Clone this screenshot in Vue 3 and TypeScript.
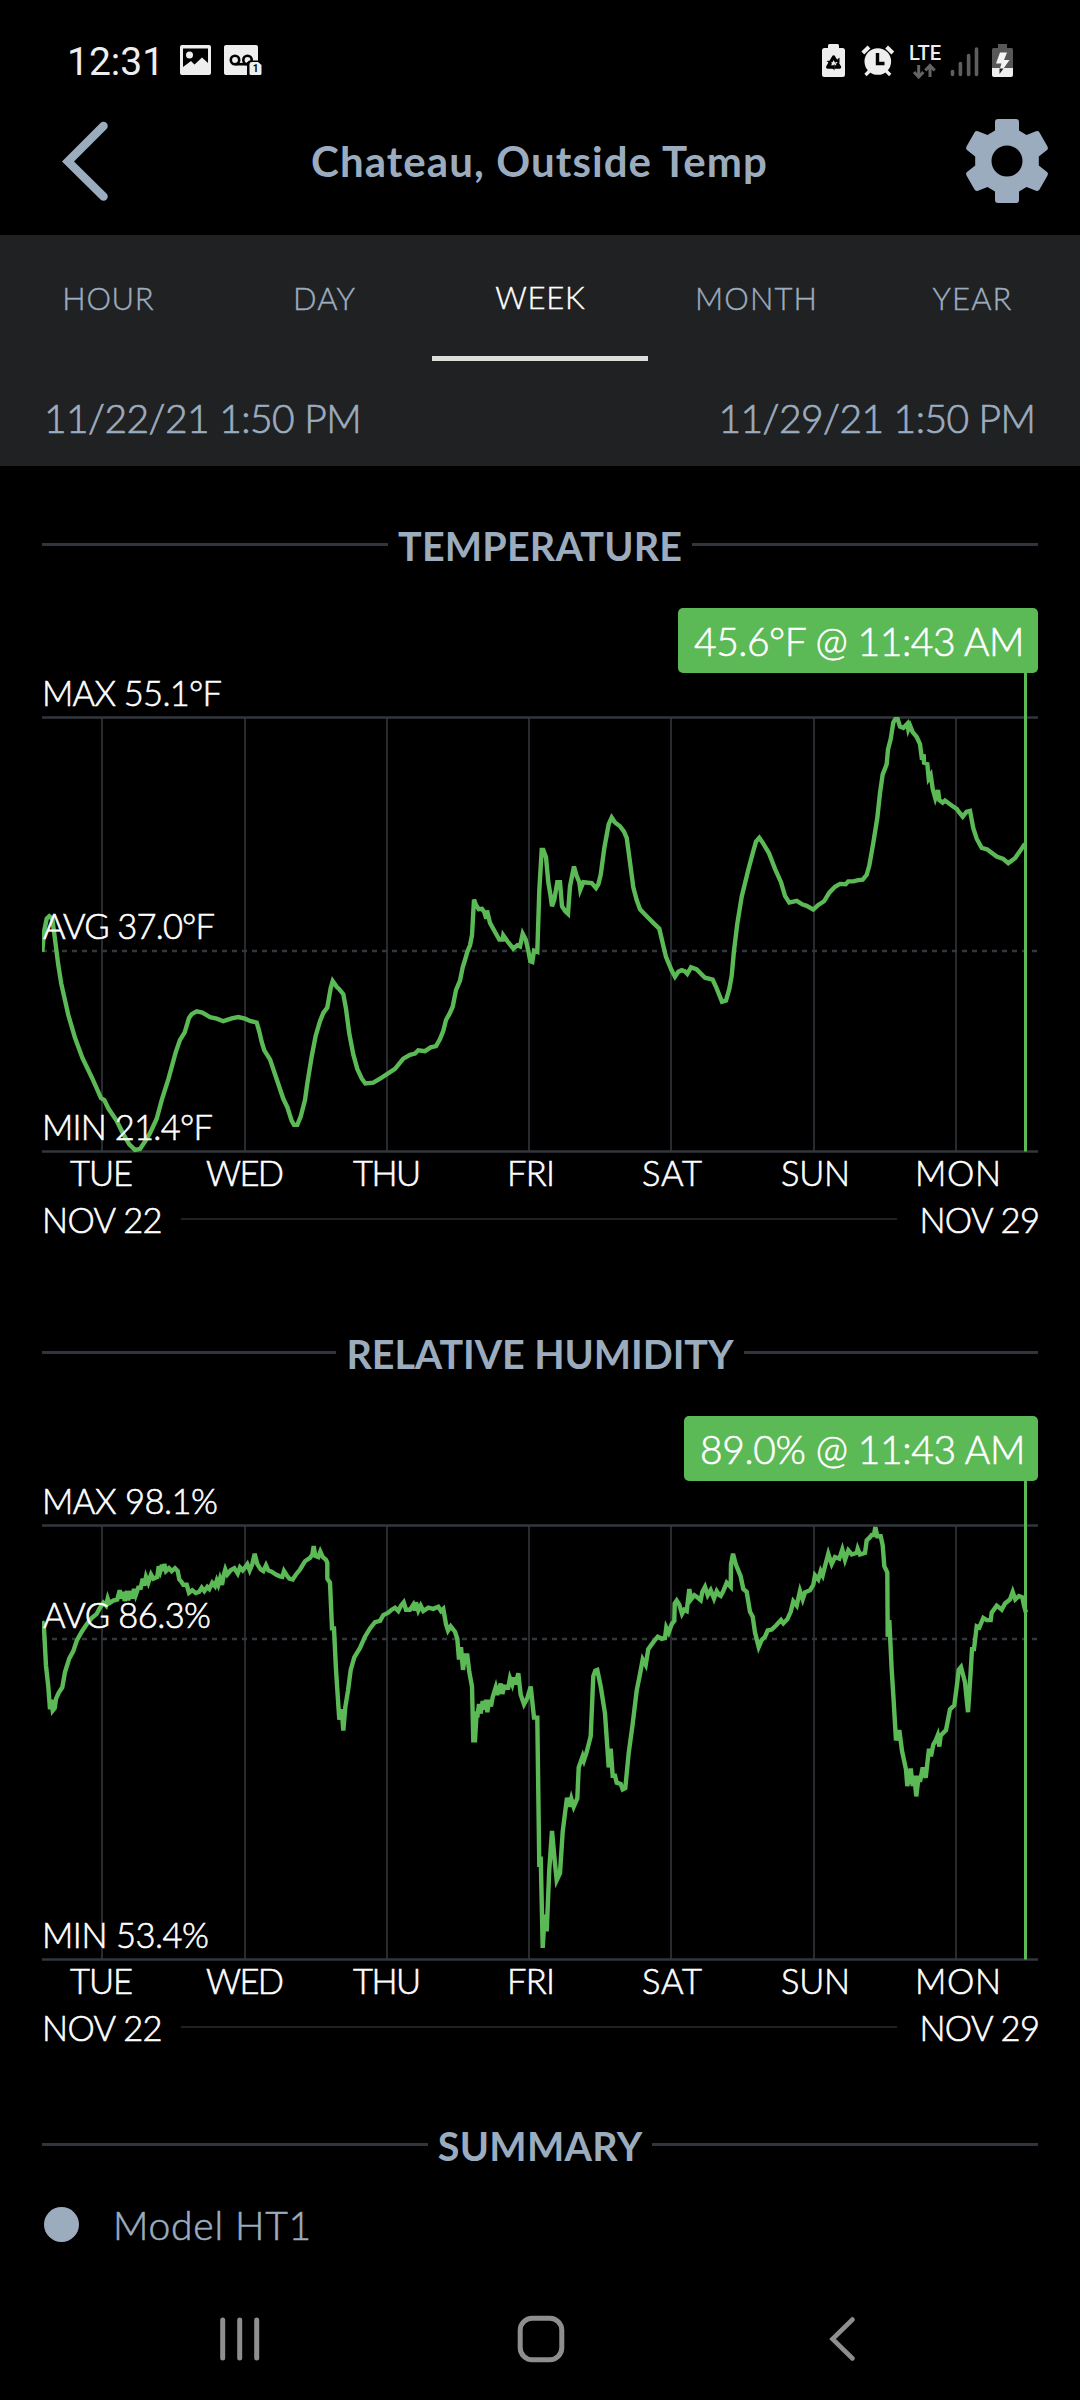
<script setup lang="ts">
import type { Directive } from 'vue'

type Sample = [number, number]
interface Block { start: number; samples: Sample[] }
interface Label { text: string; x: number; y: number; width: number }
interface Chart {
  title: string
  titleWidth: number
  readout: string
  readoutWidth: number
  boxWidth: number
  average: number
  labels: Label[]
  top: number
  blocks: Block[]
}

// Tracks a label out (or in) to the advance width it is designed for.
const vFit: Directive<HTMLElement, number> = {
  mounted(el, { value }) {
    const gap = (value - el.getBoundingClientRect().width) / (el.textContent ?? '').trim().length
    el.style.letterSpacing = `${gap}px`
    el.style.marginRight = `${-gap}px`
  },
}

const tabs = [
  { name: 'HOUR', width: 92 },
  { name: 'DAY', width: 63 },
  { name: 'WEEK', width: 90 },
  { name: 'MONTH', width: 123 },
  { name: 'YEAR', width: 80 },
]

const days: Label[] = [
  { text: 'TUE', x: 28, y: 513, width: 63 },
  { text: 'WED', x: 164, y: 513, width: 78 },
  { text: 'THU', x: 311, y: 513, width: 68 },
  { text: 'FRI', x: 465, y: 513, width: 48 },
  { text: 'SAT', x: 600, y: 513, width: 60 },
  { text: 'SUN', x: 739, y: 513, width: 69 },
  { text: 'MON', x: 873, y: 513, width: 86 },
]
const gridlines = [60, 203, 345, 487, 629, 772, 914]

const charts: Chart[] = [
  {
    title: 'TEMPERATURE', titleWidth: 284, readout: '45.6°F @ 11:43 AM', readoutWidth: 330, boxWidth: 360, average: 278,
    labels: [
      { text: 'MAX 55.1°F', x: 0, y: 33, width: 180 },
      { text: 'AVG 37.0°F', x: 1, y: 266, width: 172 },
      { text: 'MIN 21.4°F', x: 0, y: 467, width: 171 },
    ],
    top: 283,
    blocks: [
      { start: -66, samples: [[67,848],[72,800],[80,768],[88,762],[97,768],[104,812],[115,880],[124,925],[145,1000],[165,1055],[187,1103],[215,1150],[235,1185],[243,1200],[253,1205],[265,1225],[290,1255],[310,1287],[328,1312],[345,1325],[360,1323],[375,1305],[390,1285],[410,1250],[425,1205],[445,1155],[467,1090],[480,1060],[494,1042],[507,1007],[515,998],[530,991],[547,994],[570,1005],[590,1009],[610,1015],[635,1008],[655,1005],[675,1009],[692,1015],[710,1018],[718,1040],[725,1065],[733,1085],[750,1107],[770,1155],[790,1202],[802,1222],[815,1255],[822,1265],[832,1265],[842,1245],[855,1205],[862,1165],[875,1100],[887,1050],[900,1015],[910,995],[922,982],[932,935],[938,918],[950,932],[957,937],[970,950],[978,985],[988,1045],[1000,1095],[1012,1130],[1025,1153]] },
      { start: 954, samples: [[16,1165],[40,1163],[65,1151],[105,1130],[130,1105],[150,1096],[165,1093],[175,1085],[195,1087],[212,1078],[228,1075],[240,1058],[250,1038],[258,1012],[268,998],[278,980],[288,940],[300,917],[308,885],[316,865],[322,848],[330,832],[336,808],[342,722],[348,735],[356,745],[366,744],[373,752],[379,768],[381,748],[390,778],[405,800],[418,818],[428,818],[430,808],[445,825],[460,840],[472,832],[480,835],[488,804],[497,818],[505,845],[511,870],[517,872],[522,845],[532,848],[538,700],[545,602],[550,602],[558,620],[565,680],[572,715],[576,738],[583,722],[592,680],[600,680],[606,738],[616,750],[624,756],[630,690],[642,642],[650,665],[658,680],[661,698],[670,680],[695,682],[708,694],[715,685],[722,662],[733,598],[746,540],[755,524],[765,536],[780,545],[792,558],[800,573],[810,632],[820,692],[830,723],[840,745],[860,762],[880,778],[898,792],[910,833],[918,860],[935,893],[945,908],[955,896],[965,892],[975,895],[982,901],[993,885],[1010,890]] },
      { start: 1974, samples: [[15,910],[38,915],[48,932],[66,968],[78,965],[88,937],[95,905],[102,845],[112,780],[125,715],[145,650],[158,610],[168,582],[178,573],[190,587],[207,610],[225,648],[243,680],[255,713],[268,729],[290,725],[308,734],[320,737],[340,746],[355,735],[372,726],[388,705],[405,691],[420,684],[437,685],[445,678],[460,678],[475,675],[488,674],[500,662],[508,640],[520,585],[532,525],[540,465],[548,420],[554,408],[560,395],[564,360],[572,335],[580,295],[586,287],[593,287],[600,305],[610,308],[622,298],[625,312],[630,302],[638,318],[650,330],[660,347],[666,385],[671,372],[672,392],[682,395],[686,430],[692,422],[698,455],[706,478],[714,458],[718,482],[728,488],[735,483],[755,495],[770,503],[778,512],[788,522],[800,510],[810,508],[820,550],[830,575],[845,597],[862,601],[890,618],[910,624],[925,634],[945,622],[960,605],[975,587]] },
    ],
  },
  {
    title: 'RELATIVE HUMIDITY', titleWidth: 387, readout: '89.0% @ 11:43 AM', readoutWidth: 325, boxWidth: 354, average: 158,
    labels: [
      { text: 'MAX 98.1%', x: 0, y: 33, width: 176 },
      { text: 'AVG 86.3%', x: 1, y: 147, width: 168 },
      { text: 'MIN 53.4%', x: 0, y: 467, width: 167 },
    ],
    top: 302,
    blocks: [
      { start: -66, samples: [[67,532],[72,550],[78,640],[85,690],[90,745],[94,722],[98,748],[104,742],[108,720],[116,705],[127,692],[135,655],[148,622],[160,605],[170,580],[185,558],[200,540],[215,525],[230,515],[240,500],[250,488],[258,495],[263,478],[268,489],[280,483],[292,480],[299,458],[305,478],[310,462],[314,484],[321,460],[325,482],[332,460],[337,478],[342,455],[347,470],[355,452],[362,452],[368,430],[373,447],[378,426],[385,440],[393,420],[400,430],[412,426],[416,400],[421,412],[426,397],[430,412],[433,395],[438,412],[447,405],[455,412],[465,405],[473,412],[478,432],[484,437],[490,445],[500,445],[507,464],[517,458],[527,465],[537,462],[545,452],[553,460],[562,450],[568,455],[577,440],[585,448],[590,435],[595,445],[600,430],[606,445],[611,422],[616,408],[622,420],[632,410],[643,405],[653,418],[660,403],[668,410],[675,403],[682,395],[689,410],[697,395],[704,370],[712,395],[722,408],[730,412],[738,398],[745,410],[755,413],[768,420],[778,424],[787,426],[792,412],[800,422],[808,430],[818,432],[828,420],[840,408],[855,388],[870,380],[877,372],[881,352],[886,375],[895,378],[901,365],[908,378],[918,385],[922,392],[922,430],[930,440],[936,550],[942,550],[948,650],[958,770],[965,745],[970,796],[976,740],[984,700],[992,650],[1003,620]] },
      { start: 954, samples: [[0,597],[15,570],[30,550],[45,535],[60,532],[70,518],[85,512],[95,505],[105,500],[115,508],[123,495],[131,487],[138,505],[150,505],[160,493],[165,507],[168,487],[175,507],[182,495],[190,508],[205,500],[220,503],[235,498],[243,508],[250,503],[258,540],[264,555],[272,545],[285,558],[292,575],[297,625],[303,595],[309,650],[315,615],[322,615],[328,655],[336,690],[340,820],[345,820],[350,750],[352,765],[357,732],[362,755],[368,725],[375,745],[378,722],[382,752],[388,722],[393,738],[398,715],[407,692],[412,710],[422,683],[427,708],[433,690],[445,692],[450,670],[457,685],[462,668],[467,685],[475,658],[482,710],[492,733],[502,718],[512,690],[522,765],[532,765],[538,1125],[542,1100],[548,1320],[554,1240],[560,1280],[568,1130],[576,1038],[584,1110],[590,1157],[600,1140],[608,1040],[616,990],[621,958],[628,980],[634,960],[641,980],[652,960],[656,885],[668,858],[672,868],[680,848],[692,810],[700,665],[706,652],[712,650],[722,690],[735,755],[746,885],[752,840],[758,905],[765,905],[770,922],[782,925],[788,938],[796,935],[806,850],[818,780],[830,700],[840,660],[848,625],[857,638],[865,600],[880,583],[893,570],[905,575],[915,573],[919,548],[926,560],[935,540],[943,532],[944,490],[950,483],[958,493],[966,515],[973,505],[980,508],[988,455],[993,480],[1003,470],[1012,475],[1022,482],[1027,462],[1035,450],[1043,470],[1052,458],[1062,478],[1070,460],[1078,470]] },
      { start: 1974, samples: [[62,472],[70,460],[80,440],[92,450],[93,395],[99,370],[107,395],[122,425],[130,455],[140,462],[150,510],[158,522],[165,560],[176,595],[185,578],[195,570],[203,555],[215,553],[228,543],[243,530],[250,538],[262,528],[272,510],[280,485],[290,495],[300,460],[308,480],[315,463],[330,458],[340,445],[345,422],[355,432],[362,412],[368,422],[375,400],[385,370],[395,395],[405,378],[418,382],[427,360],[435,385],[445,362],[455,372],[470,368],[473,358],[480,372],[495,368],[500,338],[508,332],[515,325],[522,325],[526,306],[532,328],[542,328],[548,350],[553,400],[562,415],[563,570],[568,530],[575,650],[580,710],[588,820],[598,795],[606,845],[618,890],[622,930],[632,888],[638,930],[643,905],[649,955],[656,905],[660,920],[668,885],[677,910],[687,840],[693,858],[700,830],[707,820],[713,808],[718,835],[722,808],[738,795],[750,745],[763,735],[772,680],[776,650],[783,643],[795,680],[804,752],[810,680],[816,600],[822,600],[830,545],[838,548],[850,525],[860,530],[872,530],[875,512],[890,495],[905,505],[915,490],[930,480],[938,462],[946,480],[957,472],[967,475],[972,495],[978,512]] },
    ],
  },
]

const PLOT_TOP = 44.5
const PLOT_HEIGHT = 434
const SAMPLE_RANGE = 1046

function trace(chart: Chart): string {
  return chart.blocks
    .flatMap((b) => b.samples.map(([t, v]) => {
      const x = (b.start + t) / 3
      const y = PLOT_TOP + ((v - chart.top) * PLOT_HEIGHT) / SAMPLE_RANGE
      return `${x.toFixed(1)},${y.toFixed(1)}`
    }))
    .join(' ')
}
</script>

<template>
  <div class="screen">
    <div class="status">
      <span class="clock">12:31</span>
      <svg class="pic" width="31" height="30" viewBox="0 0 31 30">
        <path fill="#eee" fill-rule="evenodd" d="M2 0H29Q31 0 31 2V28Q31 30 29 30H2Q0 30 0 28V2Q0 0 2 0ZM3 3.500V22L11 16L14.500 19.500L22 12.500L28 18V3.500Z" />
        <circle cx="9.500" cy="10" r="3.500" fill="#eee" />
      </svg>
      <svg class="voicemail" width="38" height="30" viewBox="0 0 38 30">
        <path fill="#eee" d="M2 0H32Q34 0 34 2V15.500H26Q23.500 15.500 23.500 18V30H2Q0 30 0 28V2Q0 0 2 0Z" />
        <g fill="none" stroke="#000" stroke-width="2.600">
          <circle cx="11" cy="15" r="4.200" /><circle cx="23.500" cy="15" r="4.200" /><path d="M11 19.200H23.500" />
        </g>
        <path fill="#000" d="M23 17H34V30H23Z" />
        <path fill="#eee" d="M28 17H34L37.500 20V28.500Q37.500 30 36 30H27Q25.500 30 25.500 28.500V19Q25.500 17 28 17Z" />
        <text x="31.500" y="27" class="badge">1</text>
      </svg>
      <svg class="tray" width="194" height="40" viewBox="821 41 194 40">
        <path fill="#eee" d="M828 45.500Q828 44 829.500 44H837.500Q839 44 839 45.500V48H842.500Q845 48 845 50.500V74.500Q845 77 842.500 77H824.500Q822 77 822 74.500V50.500Q822 48 824.500 48H828Z" />
        <path d="M833.600 57L839.500 67H827.700Z" fill="none" stroke="#000" stroke-width="3.400" stroke-linejoin="round" />
        <path d="M828 60.500L833 63.500M839 59.500L835.500 63.500M833.600 65V70" stroke="#eee" stroke-width="1.300" />
        <path fill="#000" d="M839.500 57.500V63L835 61.500ZM826.500 61L831.500 60.500L831.500 65ZM834.500 64V70.500L831.500 67.200Z" />
        <circle cx="877.800" cy="61.500" r="13.300" fill="#eee" />
        <g stroke="#eee" stroke-width="4" fill="none"><path d="M862.800 53L869 47" /><path d="M892.800 53L886.600 47" /><path d="M869.500 71L865.500 75M886.200 71L890.200 75" stroke-width="3.200" /></g>
        <path d="M877.500 53V63.500H884.500" fill="none" stroke="#000" stroke-width="3.400" />
        <text x="909" y="60" class="lte" textLength="32" lengthAdjust="spacingAndGlyphs">LTE</text>
        <g fill="none" stroke="#646464" stroke-width="3"><path d="M918.700 65V77M914 72L918.700 77L923.400 72M930 77V66M925.300 70.500L930 65.500L934.700 70.500" /></g>
        <g stroke="#5e5e5e" stroke-width="3.600" stroke-linecap="round"><path d="M952.500 71.500V74.500M960.400 63.500V74.500M968.600 55.500V74.500M976.500 49V74.500" /></g>
        <path fill="#585858" d="M998 44H1007V48H1011.500Q1013 48 1013 50V68H992V50Q992 48 993.500 48H998Z" />
        <path fill="#eee" d="M992 68H1013V75Q1013 77 1011 77H994Q992 77 992 75Z" />
        <path fill="#f4f4f4" d="M1000 52.500H1007L1004 60H1009.500L1003.500 68.500H1000L1001.500 63.500H996Z" />
        <path fill="#222" d="M999.500 68.500H1003.500L999.500 74Z" />
      </svg>
    </div>

    <header class="header">
      <svg width="52" height="88" viewBox="60 118 52 88"><path d="M103.500 127L68 162.500L103.500 197.500" fill="none" stroke="#9cacbf" stroke-width="8.500" stroke-linecap="round" /></svg>
      <h1><span v-fit="457">Chateau, Outside Temp</span></h1>
      <svg width="84" height="86" viewBox="-42 -43 84 86">
        <path fill="#9cacbf" fill-rule="evenodd" d="M-9-42H9Q12-42 12-39V-30.500L19.500-26L29-29.800Q31.500-30.500 32.500-28.500L40.500-14.500Q41.500-12 40-11L31.800-4.500V4.500L40 11Q41.500 12 40.500 14.500L32.500 28.500Q31.500 30.500 29 29.800L19.500 26L12 30.500V39Q12 42 9 42H-9Q-12 42-12 39V30.500L-19.500 26L-29 29.800Q-31.500 30.500-32.500 28.500L-40.500 14.500Q-41.500 12-40 11L-31.800 4.500V-4.500L-40-11Q-41.500-12-40.500-14.500L-32.500-28.500Q-31.500-30.500-29-29.800L-19.500-26L-12-30.500V-39Q-12-42-9-42ZM0-15.500A15.500 15.500 0 1 0 0 15.500A15.500 15.500 0 1 0 0-15.500Z" />
      </svg>
    </header>

    <div class="panel">
      <nav class="tabs">
        <div v-for="t in tabs" :key="t.name" class="tab" :class="{ active: t.name === 'WEEK' }"><span v-fit="t.width">{{ t.name }}</span></div>
      </nav>
      <div class="range"><span v-fit="317">11/22/21 1:50 PM</span><span v-fit="317">11/29/21 1:50 PM</span></div>
    </div>

    <section v-for="c in charts" :key="c.title" class="section">
      <div class="heading"><i /><h2><span v-fit="c.titleWidth">{{ c.title }}</span></h2><i /></div>
      <div class="readout" :style="{ width: c.boxWidth + 'px' }"><span v-fit="c.readoutWidth">{{ c.readout }}</span></div>
      <svg class="plot" width="996" height="522" viewBox="0 0 996 522">
        <path v-for="x in gridlines" :key="x" :d="`M${x} 44.500V478.500`" stroke="#272a2e" stroke-width="2" />
        <path d="M0 44.500H996M0 478.500H996" stroke="#32373d" stroke-width="2.500" />
        <path :d="`M0 ${c.average}H996`" stroke="#32373d" stroke-width="2.500" stroke-dasharray="5 5" />
        <polyline :points="trace(c)" fill="none" stroke="#5bb956" stroke-width="4.400" />
        <path d="M983.500 0V478.500" stroke="#5bb956" stroke-width="3" />
        <text v-for="l in [...c.labels, ...days]" :key="l.text" :x="l.x" :y="l.y" :textLength="l.width">{{ l.text }}</text>
      </svg>
      <div class="span"><span v-fit="120">NOV 22</span><i /><span v-fit="120">NOV 29</span></div>
    </section>

    <section class="summary">
      <div class="heading"><i /><h2><span v-fit="205">SUMMARY</span></h2><i /></div>
      <div class="model"><b /><span v-fit="199">Model HT1</span></div>
    </section>

    <footer class="navbar">
      <svg width="42" height="46" viewBox="0 0 42 46"><path d="M3.700 4V42M20.700 4V42M37.700 4V42" stroke="#8e8e8e" stroke-width="5" stroke-linecap="round" /></svg>
      <svg class="home" width="48" height="48" viewBox="0 0 48 48"><rect x="3.200" y="3.200" width="41.600" height="41.600" rx="12" fill="none" stroke="#8e8e8e" stroke-width="5" /></svg>
      <svg width="28" height="46" viewBox="0 0 28 46"><path d="M24.500 3.500L4.500 23L24.500 42.500" fill="none" stroke="#8e8e8e" stroke-width="4.600" stroke-linecap="round" /></svg>
    </footer>
  </div>
</template>

<style>
body { margin: 0; background: #000; }
</style>

<style scoped>
.screen {
  display: flex; flex-direction: column; box-sizing: border-box;
  width: 1080px; height: 2400px; overflow: hidden;
  background: #000; color: #9cacbf; font-family: Lato, "Liberation Sans", sans-serif; font-weight: 300;
  white-space: nowrap;
}
svg { display: block; flex: none; }
h1, h2 { margin: 0; }
.status { display: flex; align-items: center; height: 88px; padding: 34px 65px 0 67px; box-sizing: border-box; }
.clock { width: 113px; padding-top: 2px; font: 400 39px/54px Roboto, sans-serif; color: #eee; }
.pic { margin-bottom: 2px; }
.voicemail { margin: 0 0 2px 13px; }
.tray { margin-left: auto; }
.badge { font: 700 10px Roboto, sans-serif; fill: #000; text-anchor: middle; }
.lte { font: 500 20px Roboto, sans-serif; fill: #eee; }
.header { display: flex; align-items: center; height: 147px; padding: 0 31px 2px 60px; box-sizing: border-box; }
.header h1 { flex: 1; padding-left: 1px; font-size: 42px; font-weight: 700; line-height: 60px; text-align: center; }
.panel { height: 231px; background: #202123; }
.tabs { display: flex; height: 126px; }
.tab { display: flex; flex: 1; align-items: center; justify-content: center; box-sizing: border-box; padding-bottom: 1px; font-size: 31px; -webkit-text-stroke: 0.4px currentColor; }
.tab.active { color: #fff; border-bottom: 5px solid #dcdedb; padding-top: 4px; }
.range { display: flex; justify-content: space-between; padding: 10px 44px 0; font-size: 39px; line-height: 94px; height: 94px; -webkit-text-stroke: 0.7px currentColor; }
.section { height: 808px; padding: 48px 42px 0; box-sizing: border-box; flex: none; }
.heading { display: flex; align-items: center; height: 60px; }
.heading i { flex: 1; height: 3px; background: #30363b; }
.heading h2 { margin: 3px 10px 0; font-size: 39.500px; font-weight: 700; line-height: 57px; }
.readout {
  display: flex; align-items: center; height: 65px; margin: 34px 0 0 auto; padding-left: 16px; box-sizing: border-box;
  border-radius: 5px; background: #5bb956; color: #fff; font-size: 39px; -webkit-text-stroke: 0.6px currentColor;
}
.plot text { font-size: 34.500px; fill: #fff; stroke: #fff; stroke-width: 0.6px; }
.span { display: flex; align-items: center; height: 48px; margin-right: -2px; color: #fff; font-size: 34.500px; -webkit-text-stroke: 0.6px currentColor; }
.span i { flex: 1; height: 2px; margin: 0 22px 0 18px; background: #202224; }
.summary { padding: 32px 42px 0; }
.model { display: flex; align-items: center; height: 49px; margin-top: 26px; font-size: 39px; -webkit-text-stroke: 0.6px currentColor; }
.model b { width: 35px; height: 35px; margin: 0 34px 0 2px; border-radius: 50%; background: #9cacbf; }
.navbar { display: flex; align-items: center; height: 126px; margin-top: auto; padding: 3px 0 0 219px; box-sizing: border-box; }
.home { margin: 0 263px 0 256px; }
</style>
